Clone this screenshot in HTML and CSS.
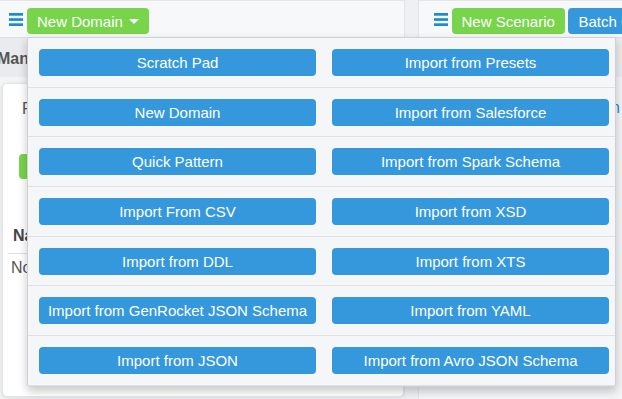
FILE: index.html
```html
<!DOCTYPE html>
<html lang="en">
<head>
<meta charset="UTF-8" />
<meta name="viewport" content="width=device-width, initial-scale=1" />
<title>Domains</title>
<link rel="stylesheet" href="styles.css">
</head>
<body>

<div class="app">
  <!-- Left pane: domains -->
  <div class="pane pane-left">
    <div class="toolbar">
      <svg class="menu-icon" width="14" height="13" viewBox="0 0 14 13">
        <rect x="0" y="0" width="14" height="2.7" />
        <rect x="0" y="5.2" width="14" height="2.7" />
        <rect x="0" y="10.3" width="14" height="2.7" />
      </svg>
      <div class="dropdown">
        <button class="btn btn-green btn-tool">New Domain <span class="caret"></span></button>

        <div class="dropdown-menu">
          <div class="menu-row">
            <button class="btn btn-blue">Scratch Pad</button>
            <button class="btn btn-blue">Import from Presets</button>
          </div>
          <div class="menu-row">
            <button class="btn btn-blue">New Domain</button>
            <button class="btn btn-blue">Import from Salesforce</button>
          </div>
          <div class="menu-row">
            <button class="btn btn-blue">Quick Pattern</button>
            <button class="btn btn-blue">Import from Spark Schema</button>
          </div>
          <div class="menu-row">
            <button class="btn btn-blue">Import From CSV</button>
            <button class="btn btn-blue">Import from XSD</button>
          </div>
          <div class="menu-row">
            <button class="btn btn-blue">Import from DDL</button>
            <button class="btn btn-blue">Import from XTS</button>
          </div>
          <div class="menu-row">
            <button class="btn btn-blue">Import from GenRocket JSON Schema</button>
            <button class="btn btn-blue">Import from YAML</button>
          </div>
          <div class="menu-row">
            <button class="btn btn-blue">Import from JSON</button>
            <button class="btn btn-blue">Import from Avro JSON Schema</button>
          </div>
        </div>
      </div>
    </div>

    <div class="page-title">Manage Domains</div>

    <div class="card">
      <div class="filter-label">Filter</div>
      <button class="btn btn-green btn-add">Add Domain</button>
      <table class="list">
        <thead>
          <tr><th>Name</th></tr>
        </thead>
        <tbody>
          <tr><td>No domains</td></tr>
        </tbody>
      </table>
    </div>
  </div>

  <div class="splitter"></div>

  <!-- Right pane: scenarios -->
  <div class="pane pane-right">
    <div class="toolbar">
      <svg class="menu-icon" width="14" height="13" viewBox="0 0 14 13">
        <rect x="0" y="0" width="14" height="2.7" />
        <rect x="0" y="5.2" width="14" height="2.7" />
        <rect x="0" y="10.3" width="14" height="2.7" />
      </svg>
      <button class="btn btn-green btn-tool">New Scenario</button>
      <button class="btn btn-blue btn-tool">Batch Create</button>
    </div>
    <div class="page-title"></div>
    <div class="link-row"><a href="#" class="link">Design</a></div>
  </div>
</div>

</body>
</html>
```

FILE: styles.css
```css
body {
  margin: 0;
  background: #f3f4f6;
  font-family: 'Liberation Sans', Arial, sans-serif;
  color: #555;
  overflow: hidden;
}
.app {
  display: flex;
  height: 399px;
}
.pane {
  display: flex;
  flex-direction: column;
  min-width: 0;
}
.pane-left {
  width: 404px;
  flex: none;
}
.pane-right {
  flex: 1;
  overflow: hidden;
}
.splitter {
  width: 13px;
  flex: none;
  background: #eef0f3;
  border-left: 1px solid #e3e5e9;
  border-right: 1px solid #e3e5e9;
}
.toolbar {
  box-sizing: border-box;
  flex: none;
  display: flex;
  align-items: flex-start;
  gap: 4px;
  padding: 7px 0 0 9px;
  height: 38px;
  background: #f7f8fa;
  border-top: 1px solid #e4e6e9;
  border-bottom: 1px solid #dcdfe3;
  white-space: nowrap;
}
.pane-right .toolbar {
  padding-left: 15px;
  gap: 3.5px;
}
.menu-icon {
  fill: #1e8ad6;
  margin-top: 5px;
  flex: none;
}
.btn {
  border: none;
  border-radius: 4px;
  color: #fff;
  font-family: 'Liberation Sans', Arial, sans-serif;
  font-size: 15px;
  cursor: pointer;
  white-space: nowrap;
}
.btn-tool {
  height: 26px;
  padding: 0 10px;
}
.btn-green {
  background: #78d44b;
}
.btn-blue {
  background: #3598dc;
}
.caret {
  display: inline-block;
  width: 0;
  height: 0;
  margin-left: 2px;
  vertical-align: 3px;
  border-left: 5px solid transparent;
  border-right: 5px solid transparent;
  border-top: 5px solid #fff;
}
.dropdown {
  position: relative;
}
.dropdown-menu {
  position: absolute;
  left: 0;
  top: 29px;
  z-index: 10;
  width: 587px;
  background: #f5f6f8;
  border: 1px solid #cfd1d4;
  border-radius: 0 0 3px 3px;
  box-shadow: 0 4px 10px rgba(0, 0, 0, 0.22);
}
.menu-row {
  display: grid;
  grid-template-columns: 1fr 1fr;
  column-gap: 16px;
  padding: 11px 6px 10.67px 11px;
  border-bottom: 1px solid #dfe1e4;
}
.menu-row .btn {
  height: 27px;
  padding: 0;
}
.page-title {
  height: 39px;
  flex: none;
  background: #e9ebee;
  font-weight: bold;
  font-size: 16px;
  line-height: 41px;
  text-indent: -3px;
  white-space: nowrap;
  overflow: hidden;
  color: #555;
}
.card {
  margin: 6px 0 2px 2px;
  flex: 1;
  background: #fff;
  border: 1px solid #e3e5e8;
  border-radius: 5px;
  padding-top: 15px;
  box-shadow: 0 1px 4px rgba(0, 0, 0, 0.12);
}
.filter-label {
  margin-left: 19px;
  font-size: 16px;
  line-height: 20px;
}
.btn-add {
  display: block;
  height: 25px;
  margin: 35px 0 0 16px;
  padding: 0 12px;
}
.list {
  margin: 40px 5px 0 5px;
  border-collapse: collapse;
  width: 380px;
  font-size: 16px;
}
.list th {
  text-align: left;
  padding: 7px 5px;
  line-height: 20px;
  color: #444;
  border-bottom: 1px solid #dddfe2;
}
.list td {
  padding: 4px 3px;
  line-height: 20px;
}
.link-row {
  display: flex;
  justify-content: flex-end;
  padding: 22px 2px 0 0;
}
.link {
  color: #2a8bd0;
  text-decoration: none;
  font-size: 16px;
}
```
